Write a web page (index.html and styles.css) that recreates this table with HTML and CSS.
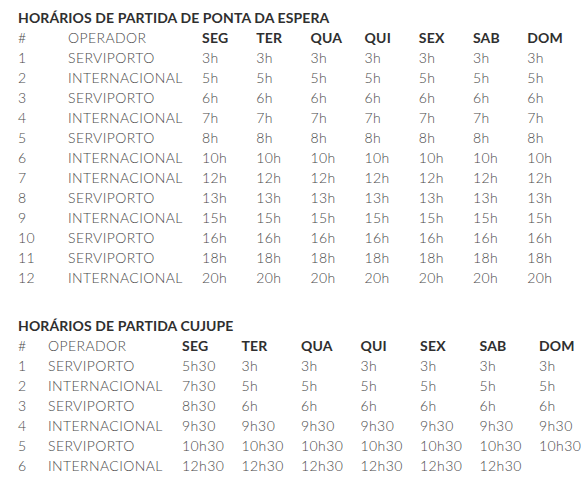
FILE: index.html
```html
<!DOCTYPE html>
<html lang="pt">
<head>
<meta charset="utf-8">
<link rel="stylesheet" href="styles.css">
</head>
<body>
<div class="page">
  <section class="block">
    <h3 class="title">HORÁRIOS DE PARTIDA DE PONTA DA ESPERA</h3>
    <table class="sched sched-a">
      <thead>
        <tr><th class="num">#</th><th class="op">OPERADOR</th><th class="day">SEG</th><th class="day">TER</th><th class="day">QUA</th><th class="day">QUI</th><th class="day">SEX</th><th class="day">SAB</th><th class="day">DOM</th></tr>
      </thead>
      <tbody>
        <tr><td>1</td><td>SERVIPORTO</td><td>3h</td><td>3h</td><td>3h</td><td>3h</td><td>3h</td><td>3h</td><td>3h</td></tr>
        <tr><td>2</td><td>INTERNACIONAL</td><td>5h</td><td>5h</td><td>5h</td><td>5h</td><td>5h</td><td>5h</td><td>5h</td></tr>
        <tr><td>3</td><td>SERVIPORTO</td><td>6h</td><td>6h</td><td>6h</td><td>6h</td><td>6h</td><td>6h</td><td>6h</td></tr>
        <tr><td>4</td><td>INTERNACIONAL</td><td>7h</td><td>7h</td><td>7h</td><td>7h</td><td>7h</td><td>7h</td><td>7h</td></tr>
        <tr><td>5</td><td>SERVIPORTO</td><td>8h</td><td>8h</td><td>8h</td><td>8h</td><td>8h</td><td>8h</td><td>8h</td></tr>
        <tr><td>6</td><td>INTERNACIONAL</td><td>10h</td><td>10h</td><td>10h</td><td>10h</td><td>10h</td><td>10h</td><td>10h</td></tr>
        <tr><td>7</td><td>INTERNACIONAL</td><td>12h</td><td>12h</td><td>12h</td><td>12h</td><td>12h</td><td>12h</td><td>12h</td></tr>
        <tr><td>8</td><td>SERVIPORTO</td><td>13h</td><td>13h</td><td>13h</td><td>13h</td><td>13h</td><td>13h</td><td>13h</td></tr>
        <tr><td>9</td><td>INTERNACIONAL</td><td>15h</td><td>15h</td><td>15h</td><td>15h</td><td>15h</td><td>15h</td><td>15h</td></tr>
        <tr><td>10</td><td>SERVIPORTO</td><td>16h</td><td>16h</td><td>16h</td><td>16h</td><td>16h</td><td>16h</td><td>16h</td></tr>
        <tr><td>11</td><td>SERVIPORTO</td><td>18h</td><td>18h</td><td>18h</td><td>18h</td><td>18h</td><td>18h</td><td>18h</td></tr>
        <tr><td>12</td><td>INTERNACIONAL</td><td>20h</td><td>20h</td><td>20h</td><td>20h</td><td>20h</td><td>20h</td><td>20h</td></tr>
      </tbody>
    </table>
  </section>
  <section class="block block-b">
    <h3 class="title">HORÁRIOS DE PARTIDA CUJUPE</h3>
    <table class="sched sched-b">
      <thead>
        <tr><th class="num">#</th><th class="op">OPERADOR</th><th class="day">SEG</th><th class="day">TER</th><th class="day">QUA</th><th class="day">QUI</th><th class="day">SEX</th><th class="day">SAB</th><th class="day last">DOM</th></tr>
      </thead>
      <tbody>
        <tr><td>1</td><td>SERVIPORTO</td><td>5h30</td><td>3h</td><td>3h</td><td>3h</td><td>3h</td><td>3h</td><td>3h</td></tr>
        <tr><td>2</td><td>INTERNACIONAL</td><td>7h30</td><td>5h</td><td>5h</td><td>5h</td><td>5h</td><td>5h</td><td>5h</td></tr>
        <tr><td>3</td><td>SERVIPORTO</td><td>8h30</td><td>6h</td><td>6h</td><td>6h</td><td>6h</td><td>6h</td><td>6h</td></tr>
        <tr><td>4</td><td>INTERNACIONAL</td><td>9h30</td><td>9h30</td><td>9h30</td><td>9h30</td><td>9h30</td><td>9h30</td><td>9h30</td></tr>
        <tr><td>5</td><td>SERVIPORTO</td><td>10h30</td><td>10h30</td><td>10h30</td><td>10h30</td><td>10h30</td><td>10h30</td><td>10h30</td></tr>
        <tr><td>6</td><td>INTERNACIONAL</td><td>12h30</td><td>12h30</td><td>12h30</td><td>12h30</td><td>12h30</td><td>12h30</td><td></td></tr>
      </tbody>
    </table>
  </section>
</div>
</body>
</html>
```
FILE: styles.css
```css
html, body {
  margin: 0;
  padding: 0;
  background: #ffffff;
}
.page {
  padding: 8px 0 0 18px;
  font-family: Lato, "Open Sans", sans-serif;
  color: #4a4a4a;
  font-size: 14px;
}
.block-b {
  margin-top: 28px;
}
.title {
  margin: 0;
  font-size: 14px;
  line-height: 20px;
  font-weight: 700;
  color: #2f2f2f;
  letter-spacing: 0.1px;
}
.sched {
  border-collapse: collapse;
  table-layout: fixed;
}
.sched th,
.sched td {
  padding: 0;
  text-align: left;
  line-height: 20px;
  height: 20px;
  white-space: nowrap;
  font-weight: 300;
  letter-spacing: 0.4px;
}
.sched th.day {
  font-weight: 700;
  color: #2f2f2f;
  letter-spacing: 0.2px;
}
.sched-a { width: 563px; }
.sched-a .num { width: 50px; }
.sched-a .op { width: 134px; }
.sched-a .day { width: 54.2px; }
.sched-b { width: 561px; }
.sched-b .num { width: 30px; }
.sched-b .op { width: 134px; }
.sched-b .day { width: 59.5px; }
.sched-b .day.last { width: 40px; }
```
